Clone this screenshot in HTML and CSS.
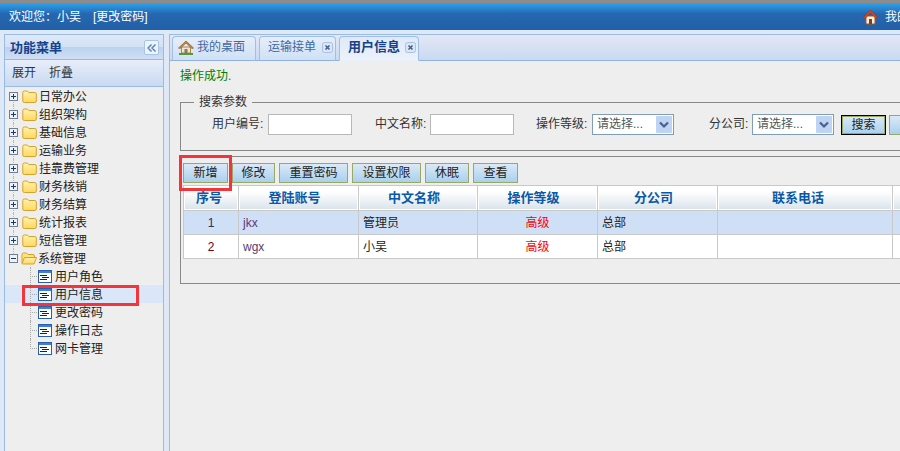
FILE: index.html
```html
<!DOCTYPE html>
<html lang="zh">
<head>
<meta charset="utf-8">
<title>用户信息</title>
<link rel="stylesheet" href="styles.css">
</head>
<body>
<svg class="defs" width="0" height="0">
  <defs>
    <linearGradient id="fg" x1="0" y1="0" x2="0" y2="1"><stop offset="0" stop-color="#fff3b0"/><stop offset="1" stop-color="#ffd75e"/></linearGradient>
    <symbol id="folder" viewBox="0 0 15 13">
      <path d="M.8 11V2.500q0-1.500 1.500-1.500h3l1.500 1.500h6q1.500 0 1.500 1.500v7q0 1.500-1.500 1.500h-10.500q-1.500 0-1.500-1.500z" fill="url(#fg)" stroke="#d6a32a"/>
    </symbol>
    <symbol id="folderopen" viewBox="0 0 16 13">
      <path d="M1 11V2.500q0-1.500 1.500-1.500h3l1.500 1.500h5q1.500 0 1.500 1.500v1.500" fill="#ffe27a" stroke="#d6a32a"/>
      <path d="M1 11.500l2.500-6h12l-2.500 6.500h-11q-1 0-1-.5z" fill="url(#fg)" stroke="#d6a32a"/>
    </symbol>
    <symbol id="plus" viewBox="0 0 9 9">
      <rect x=".5" y=".5" width="8" height="8" fill="#eef2f8" stroke="#6b7f99"/>
      <path d="M2 4.500h5M4.500 2v5" stroke="#1f3a5f"/>
    </symbol>
    <symbol id="minus" viewBox="0 0 9 9">
      <rect x=".5" y=".5" width="8" height="8" fill="#eef2f8" stroke="#6b7f99"/>
      <path d="M2 4.500h5" stroke="#1f3a5f"/>
    </symbol>
    <symbol id="page" viewBox="0 0 14 13">
      <rect x=".5" y=".5" width="13" height="12" fill="#fff" stroke="#2a5fb0"/>
      <rect x="1" y="1" width="12" height="2" fill="#3f7fd6"/>
      <path d="M2 5.500h7M4 7.500h7M2 9.500h7" stroke="#222"/>
    </symbol>
    <symbol id="close" viewBox="0 0 11 11">
      <rect x=".5" y=".5" width="10" height="10" rx="2" fill="#dbe6f5" stroke="#a9c1e2"/>
      <path d="M3.500 3.500l4 4M7.500 3.500l-4 4" stroke="#46648f" stroke-width="1.700"/>
    </symbol>
    <symbol id="arrow" viewBox="0 0 16 17">
      <rect width="16" height="17" rx="1" fill="#bfd3f3"/>
      <path d="M4 6.500l4 4 4-4" fill="none" stroke="#47608f" stroke-width="2.200"/>
    </symbol>
  </defs>
</svg>

<header class="topbar">
  <span class="welcome">欢迎您：小吴</span>
  <a class="pwd-link">[更改密码]</a>
  <div class="desk-link">
    <svg class="desk-icon" width="15" height="16" viewBox="0 0 15 16">
      <path d="M3 7h9v8h-9z" fill="#fff3df" stroke="#a5552a"/>
      <path d="M6 10h3v5h-3z" fill="#8a3b17"/>
      <path d="M.5 8.500l7-7.500 7 7.500-1.500 1-5.500-6-5.500 6z" fill="#e2491f" stroke="#a8300f" stroke-width=".7"/>
    </svg>
    <span>我的桌面</span>
  </div>
</header>

<div class="shell">
  <aside class="side">
    <div class="side-title">
      <span>功能菜单</span>
      <button class="collapse" type="button" aria-label="收起">
        <svg width="10" height="8" viewBox="0 0 10 8"><path d="M4.500 .5l-3.500 3.500 3.500 3.500M8.500 .5l-3.500 3.500 3.500 3.500" fill="none" stroke="#5b86bd" stroke-width="1.500"/></svg>
      </button>
    </div>
    <div class="side-tools"><span>展开</span><span>折叠</span></div>
    <ul class="tree">
      <li class="node"><svg class="tog"><use href="#plus"/></svg><svg class="fld"><use href="#folder"/></svg><span>日常办公</span></li>
      <li class="node"><svg class="tog"><use href="#plus"/></svg><svg class="fld"><use href="#folder"/></svg><span>组织架构</span></li>
      <li class="node"><svg class="tog"><use href="#plus"/></svg><svg class="fld"><use href="#folder"/></svg><span>基础信息</span></li>
      <li class="node"><svg class="tog"><use href="#plus"/></svg><svg class="fld"><use href="#folder"/></svg><span>运输业务</span></li>
      <li class="node"><svg class="tog"><use href="#plus"/></svg><svg class="fld"><use href="#folder"/></svg><span>挂靠费管理</span></li>
      <li class="node"><svg class="tog"><use href="#plus"/></svg><svg class="fld"><use href="#folder"/></svg><span>财务核销</span></li>
      <li class="node"><svg class="tog"><use href="#plus"/></svg><svg class="fld"><use href="#folder"/></svg><span>财务结算</span></li>
      <li class="node"><svg class="tog"><use href="#plus"/></svg><svg class="fld"><use href="#folder"/></svg><span>统计报表</span></li>
      <li class="node"><svg class="tog"><use href="#plus"/></svg><svg class="fld"><use href="#folder"/></svg><span>短信管理</span></li>
      <li class="node"><svg class="tog"><use href="#minus"/></svg><svg class="fld"><use href="#folderopen"/></svg><span>系统管理</span></li>
      <li class="leaf"><svg class="doc"><use href="#page"/></svg><span>用户角色</span></li>
      <li class="leaf current"><svg class="doc"><use href="#page"/></svg><span>用户信息</span><i class="annot annot-tree"></i></li>
      <li class="leaf"><svg class="doc"><use href="#page"/></svg><span>更改密码</span></li>
      <li class="leaf"><svg class="doc"><use href="#page"/></svg><span>操作日志</span></li>
      <li class="leaf last"><svg class="doc"><use href="#page"/></svg><span>网卡管理</span></li>
    </ul>
  </aside>

  <main class="main">
    <nav class="tabs">
      <div class="tab tab-home">
        <svg width="16" height="15" viewBox="0 0 16 15">
          <path d="M3.500 7h9v6h-9z" fill="#f3e6c8" stroke="#a78652"/>
          <path d="M6.500 9h3v4h-3z" fill="#7d7a70"/>
          <path d="M.5 8l7.500-7 7.500 7-1.500 .5-6-5.500-6 5.500z" fill="#c98a3a" stroke="#8f5f22" stroke-width=".7"/>
          <path d="M1 14h14" stroke="#4f9a3c" stroke-width="2"/>
        </svg>
        <span>我的桌面</span>
      </div>
      <div class="tab tab-freight"><span>运输接单</span><svg class="x"><use href="#close"/></svg></div>
      <div class="tab tab-active"><span>用户信息</span><svg class="x"><use href="#close"/></svg></div>
    </nav>
    <div class="content">
      <p class="msg">操作成功.</p>
      <fieldset class="search">
        <legend>搜索参数</legend>
        <div class="search-row">
          <label class="lbl lbl-a">用户编号:</label><input class="txt" type="text">
          <label class="lbl lbl-b">中文名称:</label><input class="txt" type="text">
          <label class="lbl lbl-c">操作等级:</label>
          <div class="combo"><span>请选择...</span><svg class="combo-arrow"><use href="#arrow"/></svg></div>
          <label class="lbl lbl-d">分公司:</label>
          <div class="combo"><span>请选择...</span><svg class="combo-arrow"><use href="#arrow"/></svg></div>
          <button class="btn btn-search" type="button">搜索</button>
          <button class="btn btn-reset" type="button">重置</button>
        </div>
      </fieldset>
      <section class="result">
        <div class="actions">
          <button class="btn btn-2" type="button">新增</button>
          <button class="btn btn-2b" type="button">修改</button>
          <button class="btn btn-4" type="button">重置密码</button>
          <button class="btn btn-4" type="button">设置权限</button>
          <button class="btn btn-2c" type="button">休眠</button>
          <button class="btn btn-2" type="button">查看</button>
          <i class="annot annot-add"></i>
        </div>
        <table class="grid">
          <colgroup>
            <col class="c1"><col class="c2"><col class="c3"><col class="c4"><col class="c5"><col class="c6"><col class="c7">
          </colgroup>
          <thead>
            <tr><th>序号</th><th>登陆账号</th><th>中文名称</th><th>操作等级</th><th>分公司</th><th>联系电话</th><th></th></tr>
          </thead>
          <tbody>
            <tr class="sel"><td class="num">1</td><td class="acct">jkx</td><td>管理员</td><td class="lvl">高级</td><td>总部</td><td></td><td></td></tr>
            <tr><td class="num">2</td><td class="acct">wgx</td><td>小吴</td><td class="lvl">高级</td><td>总部</td><td></td><td></td></tr>
          </tbody>
        </table>
      </section>
    </div>
  </main>
</div>
</body>
</html>
```
FILE: styles.css
```css
* { box-sizing: border-box; }
html, body { margin: 0; padding: 0; }
body {
  width: 900px;
  height: 451px;
  overflow: hidden;
  display: flex;
  flex-direction: column;
  background: #dfe8f6;
  font: 12px/18px "Liberation Sans", "Noto Sans CJK SC", sans-serif;
  color: #222;
}
.defs { display: block; height: 0; }

.annot {
  position: absolute;
  border: 3px solid #f5333a;
  z-index: 2;
}
.annot-tree { left: 17px; top: 0; width: 117px; height: 21px; }
.annot-add { left: -4px; top: -8px; width: 53px; height: 36px; }

.topbar {
  height: 30px;
  flex: none;
  display: flex;
  align-items: center;
  padding-left: 9px;
  color: #fff;
  border-top: 3px solid #8c8c8c;
  background: linear-gradient(#2ea3ee 0, #2567b0 11px, #2260a8 100%);
  background-clip: padding-box;
}
.welcome { width: 84px; }
.pwd-link { width: 60px; white-space: nowrap; }
.desk-link {
  margin-left: auto;
  width: 37px;
  display: flex;
  align-items: center;
  gap: 7px;
  overflow: hidden;
  white-space: nowrap;
  flex: none;
}
.desk-icon { flex: none; }
.desk-link span { flex: none; }

.shell {
  flex: 1;
  min-height: 0;
  display: flex;
  padding: 4px 0 0 4px;
  gap: 5px;
}

.side {
  width: 160px;
  flex: none;
  border: 1px solid #99bbe8;
  border-bottom: 0;
  background: #eee;
  display: flex;
  flex-direction: column;
}
.side-title {
  height: 25px;
  flex: none;
  display: flex;
  align-items: center;
  justify-content: space-between;
  padding: 1px 4px 0 5px;
  font-size: 13px;
  font-weight: bold;
  color: #15428b;
  background: linear-gradient(#dfe9f8 0, #d3e1f5 50%, #bcd2ef 52%, #cfdff4 100%);
  border-bottom: 1px solid #99bbe8;
}
.collapse {
  width: 15px;
  height: 15px;
  padding: 0;
  display: flex;
  align-items: center;
  justify-content: center;
  border: 1px solid #a9c4e8;
  border-radius: 2px;
  background: #eef4fc;
}
.side-tools {
  height: 27px;
  flex: none;
  display: flex;
  align-items: center;
  gap: 13px;
  padding-left: 7px;
  color: #333;
  background: linear-gradient(#e8edf9, #c9daf1);
  border-bottom: 1px solid #99bbe8;
}
.tree {
  list-style: none;
  margin: 0;
  padding: 0;
  color: #222;
}
.node, .leaf {
  height: 18px;
  display: flex;
  align-items: center;
  white-space: nowrap;
  position: relative;
}
.node span, .leaf span { padding-top: 2px; }
.node { padding-left: 4px; }
.node::before {
  content: "";
  position: absolute;
  left: 8px;
  top: 0;
  height: 18px;
  border-left: 1px dotted #bbb;
}
.node:first-child::before { top: 9px; height: 9px; }
.node:nth-child(10)::before { height: 9px; }
.tog { width: 9px; height: 9px; flex: none; position: relative; }
.fld { width: 15px; height: 13px; margin: 0 2px 0 4px; flex: none; }
.node:nth-child(10) .fld { width: 16px; margin: 0 1px 0 3px; }
.leaf { padding-left: 33px; }
.doc { width: 14px; height: 13px; margin-right: 3px; flex: none; position: relative; }
.leaf::before {
  content: "";
  position: absolute;
  left: 25px;
  top: 0;
  width: 8px;
  height: 9px;
  border-left: 1px dotted #aaa;
  border-bottom: 1px dotted #aaa;
}
.leaf:not(.last)::after {
  content: "";
  position: absolute;
  left: 25px;
  top: 9px;
  height: 9px;
  border-left: 1px dotted #aaa;
}
.current { background: #d9e7f8; }

.main {
  flex: 1;
  min-width: 0;
  border-left: 1px solid #99bbe8;
  border-top: 1px solid #99bbe8;
  background: #eee;
  display: flex;
  flex-direction: column;
  overflow: hidden;
}
.tabs {
  height: 26px;
  flex: none;
  display: flex;
  align-items: flex-end;
  gap: 3px;
  padding-left: 2px;
  background: linear-gradient(#e3e7f6, #c9daf0);
  border-bottom: 1px solid #8db2e3;
}
.tab {
  height: 25px;
  margin-bottom: -1px;
  padding: 0 0 3px 8px;
  display: flex;
  align-items: center;
  color: #416aa3;
  border: 1px solid #a3bee4;
  border-bottom-color: #8db2e3;
  border-radius: 4px 4px 0 0;
  background: linear-gradient(#e6eefa, #cfe0f5);
}
.tab-home { width: 84px; gap: 3px; padding-left: 5px; }
.tab-freight { width: 77px; gap: 6px; }
.tab-active {
  width: 80px;
  gap: 5px;
  font-size: 13px;
  font-weight: bold;
  color: #15428b;
  border-bottom-color: #e9f0fa;
  background: linear-gradient(#dfe9f8, #ecf2fb);
}
.x { width: 11px; height: 11px; flex: none; }

.content {
  flex: 1;
  width: 900px;
  padding: 6px 0 0 10px;
}
.msg {
  margin: 0;
  height: 18px;
  color: #008000;
}
.search {
  margin: 10px 0 0;
  padding: 0;
  height: 56px;
  border: 1px solid #888;
  min-width: 0;
}
.search legend {
  margin-left: 13px;
  padding: 0 5px;
  line-height: 14px;
  color: #333;
}
.search-row {
  display: flex;
  align-items: center;
  height: 22px;
  margin-top: 4px;
  white-space: nowrap;
}
.lbl { flex: none; color: #333; }
.lbl-a { margin-left: 31px; width: 56px; }
.lbl-b { margin-left: 23px; width: 55px; }
.lbl-c { margin-left: 22px; width: 56px; }
.lbl-d { margin-left: 35px; width: 43px; }
.txt {
  width: 84px;
  height: 21px;
  flex: none;
  padding: 0 3px;
  background: #fff;
  border: 1px solid #b8b8b8;
  outline: 0;
}
.combo {
  width: 82px;
  height: 21px;
  flex: none;
  display: flex;
  align-items: center;
  justify-content: space-between;
  padding: 1px 1px 1px 4px;
  color: #555;
  background: #fff;
  border: 1px solid #7f9db9;
}
.combo-arrow { width: 16px; height: 17px; flex: none; }
.btn {
  height: 20px;
  flex: none;
  padding: 0;
  font: inherit;
  color: #222;
  border: 1px solid #98a866;
  background: linear-gradient(#dbe9f7, #a9d0ee);
}
.btn-search {
  width: 45px;
  margin-left: 7px;
  border: 1px solid #000;
  outline: 1px solid #98a866;
  outline-offset: -2px;
  margin-top: 2px;
}
.btn-reset { width: 45px; margin-left: 3px; margin-top: 2px; }

.result {
  margin-top: 5px;
  height: 128px;
  border: 1px solid #888;
  border-right-width: 0;
  padding: 6px 0 0 2px;
}
.actions {
  position: relative;
  display: flex;
  gap: 4px;
  height: 20px;
}
.btn-2 { width: 45px; }
.btn-2b { width: 43px; }
.btn-2c { width: 44px; }
.btn-4 { width: 69px; }
.grid {
  margin-top: 2px;
  width: 760px;
  table-layout: fixed;
  border-collapse: collapse;
  background: #fff;
}
.c1 { width: 55px; }
.c2 { width: 120px; }
.c3 { width: 119px; }
.c4 { width: 120px; }
.c5 { width: 120px; }
.c6 { width: 175px; }
.c7 { width: 51px; }
.grid th, .grid td {
  border: 1px solid #c9c9c9;
  padding: 0 4px;
  height: 24px;
}
.grid th {
  height: 25px;
  padding: 0 8px 0 0;
  font-size: 13px;
  color: #0a58a8;
  font-weight: bold;
  text-align: center;
  background: linear-gradient(#fff 20%, #d8e2ea);
  box-shadow: inset 0 0 0 1px #fff;
}
.grid th:first-child { padding-right: 4px; }
.grid th:nth-child(6) { padding-right: 14px; }
.sel td { background: #cfdff6; }
.num { text-align: center; color: #800000; }
.sel .num { color: #223366; }
.acct { color: #5a3a7a; }
.lvl { color: #f00; text-align: center; }
```
